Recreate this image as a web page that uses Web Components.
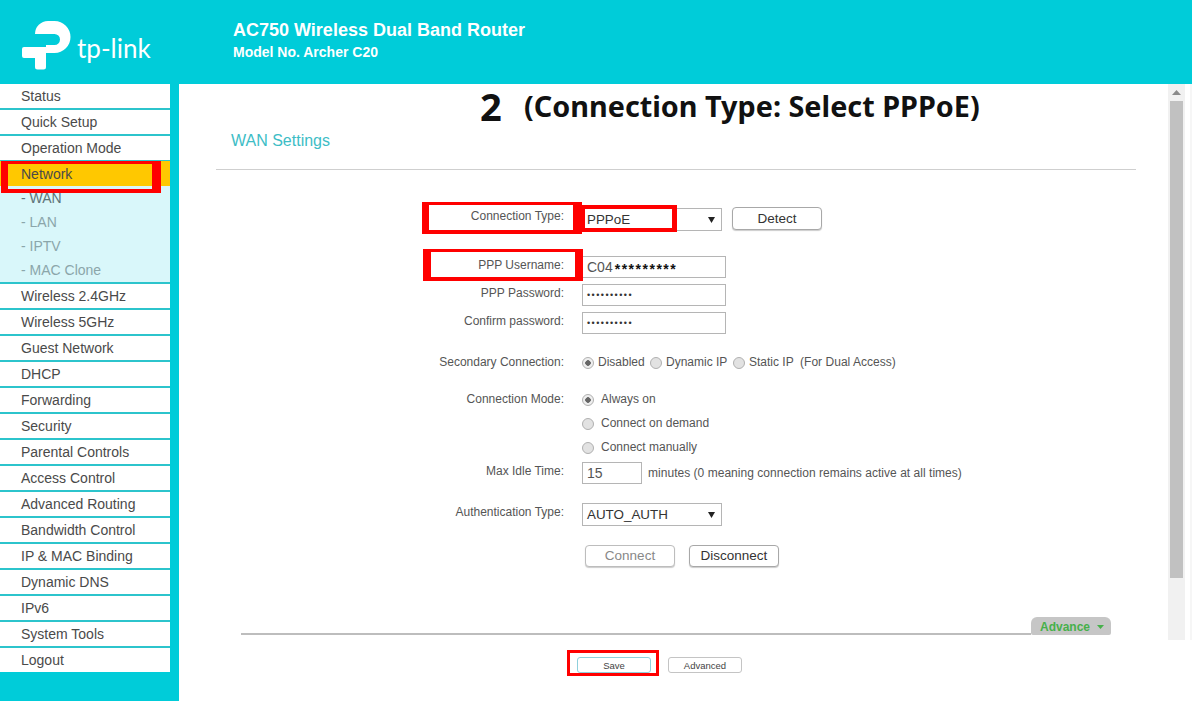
<!DOCTYPE html>
<html><head><meta charset="utf-8"><title>TP-Link</title>
<style>
html,body{margin:0;padding:0;background:#fff}
body{position:relative;width:1192px;height:701px;overflow:hidden;font-family:"Liberation Sans",Arial,sans-serif;color:#4a4a4a}
tp-shell{display:block}
</style></head><body>
<tp-shell>
  <tp-header></tp-header>
  <tp-body-row>
    <tp-menu>
      <tp-item>Status</tp-item><tp-item>Quick Setup</tp-item><tp-item>Operation Mode</tp-item>
      <tp-item active>Network</tp-item>
      <tp-sub><tp-subitem current>- WAN</tp-subitem><tp-subitem>- LAN</tp-subitem><tp-subitem>- IPTV</tp-subitem><tp-subitem>- MAC Clone</tp-subitem></tp-sub>
      <tp-item>Wireless 2.4GHz</tp-item><tp-item>Wireless 5GHz</tp-item><tp-item>Guest Network</tp-item><tp-item>DHCP</tp-item><tp-item>Forwarding</tp-item><tp-item>Security</tp-item><tp-item>Parental Controls</tp-item><tp-item>Access Control</tp-item><tp-item>Advanced Routing</tp-item><tp-item>Bandwidth Control</tp-item><tp-item>IP &amp; MAC Binding</tp-item><tp-item>Dynamic DNS</tp-item><tp-item>IPv6</tp-item><tp-item>System Tools</tp-item><tp-item last>Logout</tp-item>
    </tp-menu>
    <tp-main>
      <tp-frame>
        <tp-page-title>WAN Settings</tp-page-title>
        <tp-rule></tp-rule>
        <tp-field label="Connection Type:" style="margin-top:38px">
          <tp-select style="width:140px">PPPoE</tp-select>
          <tp-button style="width:90px;height:23px;margin:-1px 0 0 10px">Detect</tp-button>
        </tp-field>
        <tp-field label="PPP Username:" style="margin-top:25px;--lt:1px"><tp-input style="width:144px">C04<b>*********</b></tp-input></tp-field>
        <tp-field label="PPP Password:" style="margin-top:6px;--lt:1px"><tp-input style="width:144px" dots>••••••••••</tp-input></tp-field>
        <tp-field label="Confirm password:" style="margin-top:6px;--lt:1px"><tp-input style="width:144px" dots>••••••••••</tp-input></tp-field>
        <tp-field label="Secondary Connection:" style="margin-top:20px">
          <tp-radio checked style="width:68px">Disabled</tp-radio>
          <tp-radio style="width:83px">Dynamic IP</tp-radio>
          <tp-radio style="width:67px">Static IP</tp-radio>
          <tp-note>(For Dual Access)</tp-note>
        </tp-field>
        <tp-field label="Connection Mode:" style="margin-top:21px">
          <tp-stack>
            <tp-radio checked wide>Always on</tp-radio>
            <tp-radio wide>Connect on demand</tp-radio>
            <tp-radio wide>Connect manually</tp-radio>
          </tp-stack>
        </tp-field>
        <tp-field label="Max Idle Time:" style="margin-top:7px;--lt:1px"><tp-input style="width:60px">15</tp-input><tp-note style="margin:3px 0 0 6px">minutes (0 meaning connection remains active at all times)</tp-note></tp-field>
        <tp-field label="Authentication Type:" style="margin-top:19px;--lt:1px"><tp-select style="width:140px">AUTO_AUTH</tp-select></tp-field>
        <tp-field label="" style="margin-top:19px">
          <tp-button disabled style="width:90px;height:22px;margin-left:3px;padding-bottom:2px">Connect</tp-button>
          <tp-button style="width:90px;height:22px;margin-left:14px;padding-bottom:2px">Disconnect</tp-button>
        </tp-field>
        <tp-advance-bar style="margin-top:50px"></tp-advance-bar>
      </tp-frame>
      <tp-scrollbar></tp-scrollbar>
    </tp-main>
  </tp-body-row>
</tp-shell>
<tp-bottom>
  <tp-small-button focus>Save</tp-small-button>
  <tp-small-button style="margin-left:17px">Advanced</tp-small-button>
</tp-bottom>
<tp-heading></tp-heading>
<tp-mark style="left:1px;top:161px;width:160px;height:32px;border-width:3px 9px 4px 7px"></tp-mark>
<tp-mark style="left:422px;top:202px;width:160px;height:32px;border-width:3px 9px 4px 7px"></tp-mark>
<tp-mark style="left:582px;top:205px;width:95px;height:27px;border-width:4px 5px 4px 3px"></tp-mark>
<tp-mark style="left:423px;top:249px;width:160px;height:32px;border-width:3px 8px 4px 8px"></tp-mark>
<tp-mark style="left:567px;top:650px;width:92px;height:26px;border-width:3px"></tp-mark>
<script>
function el(name,html){
  customElements.define(name,class extends HTMLElement{
    constructor(){super();const r=this.attachShadow({mode:"open"});r.innerHTML=html;}
  });
}
function attrEl(name,render){
  customElements.define(name,class extends HTMLElement{
    connectedCallback(){if(this.shadowRoot)return;const r=this.attachShadow({mode:"open"});r.innerHTML=render(this);}
  });
}
el("tp-shell",`<style>:host{display:block}</style><slot></slot>`);
el("tp-header",`<style>
:host{display:flex;height:84px;background:#00ccd9;color:#fff;box-sizing:border-box}
.logo{width:233px;flex:none;display:flex;position:relative}
svg{display:block;flex:none}
.word{font:400 26px/1 Lato,"Noto Sans",sans-serif;color:#fff;margin:35px 0 0 5px;height:30px}
.t{padding-top:20px}
.a{font:700 18px/21px "Liberation Sans",Arial,sans-serif}
.b{font:700 14px/17px "Liberation Sans",Arial,sans-serif;margin-top:3px}
</style>
<div class="logo"><svg width="72" height="84" viewBox="0 0 72 84"><path fill="#fff" d="M35 34A13 13 0 0 1 48 21H54.5A16 16 0 0 1 54.5 53H46V67Q46 69.5 43.5 69.5H37.5Q35 69.5 35 67V58H24Q22 58 22 56V49Q22 47 24 47H46V45H54.5A5.5 5.5 0 0 0 54.5 34Z"/></svg><span class="word">tp-link</span></div>
<div class="t"><div class="a">AC750 Wireless Dual Band Router</div><div class="b">Model No. Archer C20</div></div>`);
el("tp-body-row",`<style>:host{display:flex;height:617px}</style><slot></slot>`);
el("tp-menu",`<style>:host{display:block;width:179px;flex:none;background:#00ccd9;box-sizing:border-box;padding-right:9px}</style><slot></slot>`);
attrEl("tp-item",h=>{
 const a=h.hasAttribute("active"),l=h.hasAttribute("last");
 return `<style>:host{display:block;box-sizing:border-box;height:${a?25:l?24:26}px;${a?"margin-top:-1px;":""}background:${a?"#ffc800":"#fff"};${a||l?"":"border-bottom:2px solid #2cc4cc;"}padding-left:21px;font-size:14px;line-height:${a?26:24}px;color:#4a4a4a}</style><slot></slot>`;
});
el("tp-sub",`<style>:host{display:block;height:98px;box-sizing:border-box;background:#d9f7fa;border-bottom:2px solid #2cc4cc}</style><slot></slot>`);
attrEl("tp-subitem",h=>`<style>:host{display:block;height:24px;line-height:24px;padding-left:21px;font-size:14px;color:${h.hasAttribute("current")?"#5d7479":"#8ba6aa"}}</style><slot></slot>`);
el("tp-main",`<style>:host{flex:1;display:flex;height:556px;background:#fff;min-width:0;justify-content:flex-start;box-sizing:border-box;border-right:2px solid #f6f6f6}</style><slot></slot>`);
el("tp-frame",`<style>:host{display:block;width:989px;flex:none;overflow:hidden}</style><slot></slot>`);
el("tp-page-title",`<style>:host{display:block;box-sizing:border-box;height:67px;padding:47px 0 0 52px;font-size:16px;line-height:20px;color:#3dbdc6}</style><slot></slot>`);
el("tp-rule",`<style>:host{display:block;margin:18px 0 0 37px;width:920px;height:1px;background:#cfcfcf}</style>`);
attrEl("tp-field",h=>`<style>:host{display:flex;align-items:flex-start}
.l{width:385px;flex:none;margin-right:18px;box-sizing:border-box;padding-top:var(--lt,0);text-align:right;font-size:12px;line-height:16px;color:#555}
.c{display:flex;align-items:flex-start}</style><div class="l">${h.getAttribute("label")}</div><div class="c"><slot></slot></div>`);
el("tp-select",`<style>:host{display:flex;align-items:center;justify-content:space-between;box-sizing:border-box;height:23px;background:#fff;border:1px solid #b5b5b5;padding:0 6px 1px 4px;font-size:13.4px;color:#333}
svg{display:block;margin-top:1px}</style><slot></slot><svg width="7" height="6" viewBox="0 0 7 6"><path d="M0 0H7L3.5 6Z" fill="#222"/></svg>`);
attrEl("tp-input",h=>`<style>:host{display:flex;align-items:center;box-sizing:border-box;height:22px;background:#fff;border:1px solid #b5b5b5;padding:0 4px;font-size:${h.hasAttribute("dots")?"9px":"14px"};color:${h.hasAttribute("dots")?"#333":"#555"};white-space:pre;${h.hasAttribute("dots")?"letter-spacing:1.45px;":""}}
::slotted(b){color:#111;font-size:14px;letter-spacing:1.5px;margin-left:2px;line-height:1;padding-top:4px}</style><slot></slot>`);
attrEl("tp-button",h=>`<style>:host{display:flex;align-items:center;justify-content:center;box-sizing:border-box;background:#fff;border:1px solid ${h.hasAttribute("disabled")?"#bdbdbd":"#a8a8a8"};border-radius:4px;font-size:13.5px;color:${h.hasAttribute("disabled")?"#888":"#333"};box-shadow:0 1px 1px #ccc}</style><slot></slot>`);
attrEl("tp-radio",h=>`<style>:host{display:flex;align-items:center;height:16px;font-size:12px;color:#555;white-space:nowrap}
i{display:block;box-sizing:border-box;width:12px;height:12px;border-radius:50%;flex:none;margin-right:${h.hasAttribute("wide")?7:4}px;margin-top:1px;border:1px solid #b0b0b0;background:${h.hasAttribute("checked")?"radial-gradient(circle,#666 0 2.5px,#eee 3px)":"#e2e2e2"}}</style><i></i><slot></slot>`);
el("tp-note",`<style>:host{display:block;font-size:12px;line-height:16px;color:#555;white-space:nowrap;letter-spacing:.03px}</style><slot></slot>`);
el("tp-stack",`<style>:host{display:flex;flex-direction:column;gap:8px}</style><slot></slot>`);
el("tp-advance-bar",`<style>:host{display:flex;align-items:flex-end;margin-left:62px}
.line{width:790px;height:2px;background:#bdbdbd}
.p{width:80px;height:18px;box-sizing:border-box;background:#c6c6c6;border-radius:6px 6px 2px 2px;color:#46b04a;font-size:12px;font-weight:700;line-height:18px;padding:1px 0 0 9px;display:flex;align-items:center;gap:7px}
svg{display:block}</style><div class="line"></div><div class="p"><span>Advance</span><svg width="7" height="4" viewBox="0 0 7 4"><path d="M0 0H7L3.5 4Z" fill="#46b04a"/></svg></div>`);
el("tp-scrollbar",`<style>:host{display:flex;flex-direction:column;width:17px;flex:none;background:#f1f1f1;box-sizing:border-box;padding:0 2px}
.up{height:17px;display:flex;align-items:center;justify-content:center}
.th{width:13px;height:477px;background:#c1c1c1}
svg{display:block}</style><div class="up"><svg width="9" height="5" viewBox="0 0 9 5"><path d="M0 5L4.5 0L9 5Z" fill="#8a8a8a"/></svg></div><div class="th"></div>`);
el("tp-bottom",`<style>:host{display:flex;position:absolute;left:577px;top:657px}</style><slot></slot>`);
attrEl("tp-small-button",h=>`<style>:host{display:flex;align-items:center;justify-content:center;box-sizing:border-box;width:74px;height:16px;background:#fff;border:1px solid ${h.hasAttribute("focus")?"#8fd0dc":"#c4c4c4"};border-radius:3px;font-size:9.5px;color:#444}</style><slot></slot>`);
el("tp-heading",`<style>:host{position:absolute;left:480px;top:84px;display:flex;align-items:center;height:44px;color:#111;font-family:"Noto Sans","Open Sans",sans-serif;font-weight:700;white-space:nowrap}
.n{font-size:38px;width:44px;line-height:44px}.t{font-size:28.8px;line-height:44px}</style><span class="n">2</span><span class="t">(Connection Type: Select PPPoE)</span>`);
el("tp-mark",`<style>:host{position:absolute;display:block;box-sizing:border-box;border-style:solid;border-color:#f00}</style>`);
</script>
</body></html>
